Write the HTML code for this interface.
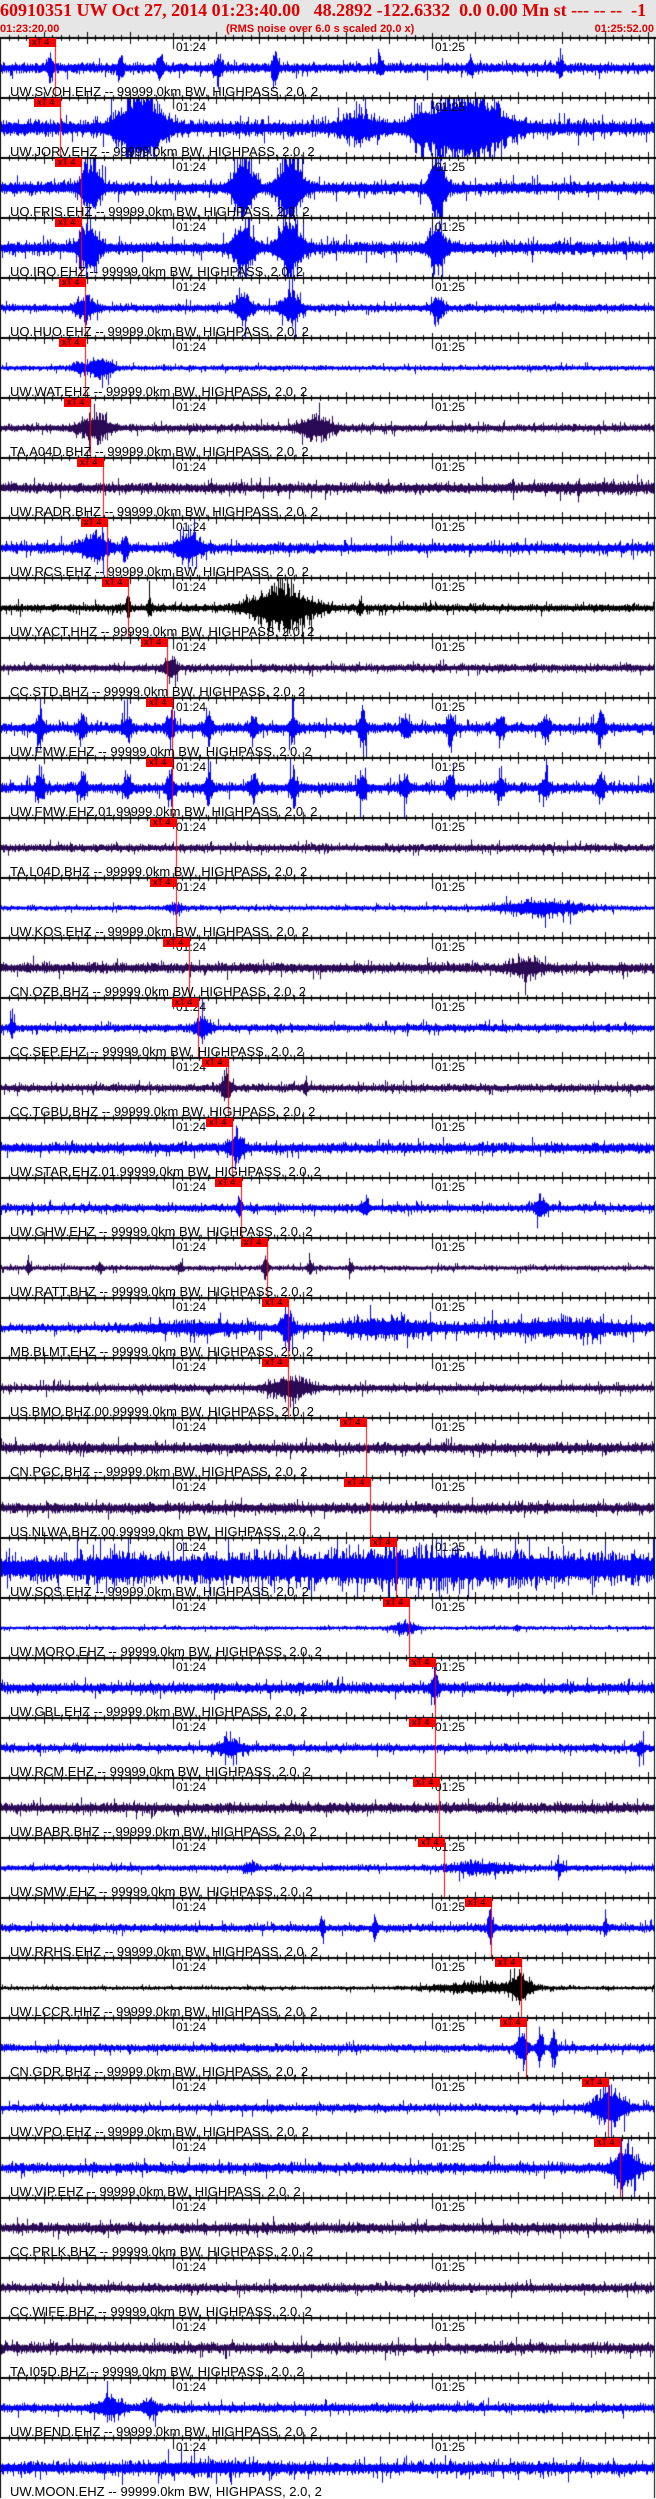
<!DOCTYPE html>
<html><head><meta charset="utf-8">
<style>
html,body{margin:0;padding:0;background:#fff;}
body{width:656px;height:2498px;position:relative;overflow:hidden;font-family:"Liberation Sans",sans-serif;}
#hdr{position:absolute;left:0;top:0;width:656px;height:38px;background:#e6e6e6;}
.t1{position:absolute;left:0;top:0px;font-family:"Liberation Serif",serif;font-weight:bold;font-size:18px;color:#e00000;white-space:pre;line-height:20px;}
.t2{position:absolute;top:23px;font-weight:bold;font-size:11px;color:#e00000;white-space:pre;line-height:13px;}
canvas{position:absolute;left:0;top:0;}
.lab{position:absolute;left:10px;font-size:13px;color:#000;white-space:pre;line-height:13px;}
.tl{position:absolute;font-size:12px;color:#000;line-height:12px;}
.mk{position:absolute;height:9px;width:27px;background:#f00;font-size:9px;line-height:9px;color:#000;text-indent:3px;}
</style></head><body>
<div id="hdr">
<div class="t1">60910351 UW Oct 27, 2014 01:23:40.00   48.2892 -122.6332  0.0 0.00 Mn st --- -- --  -1</div>
<div class="t2" style="left:0">01:23:20.00</div>
<div class="t2" style="left:226px">(RMS noise over 6.0 s scaled 20.0 x)</div>
<div class="t2" style="right:2px">01:25:52.00</div>
</div>
<canvas id="c" width="656" height="2498"></canvas>
<div id="ov"></div>
<script>
(function(){
var B='#0000ff',P='#2a0a55',K='#000000';
var panels=[
["UW.SVOH.EHZ -- 99999.0km BW, HIGHPASS, 2.0, 2",B,4,56,[[50,3,16],[160,3,16],[218,3,16],[275,3,22],[120,3,10],[380,3,10],[470,3,10],[560,3,8]]],
["UW.JORV.EHZ -- 99999.0km BW, HIGHPASS, 2.0, 2",B,6,61,[[140,22,40],[360,20,12],[420,10,14],[465,38,40]]],
["UO.FRIS.EHZ -- 99999.0km BW, HIGHPASS, 2.0, 2",B,5,82,[[90,10,28],[243,10,40],[290,12,40],[437,8,40]]],
["UO.IRO.EHZ -- 99999.0km BW, HIGHPASS, 2.0, 2",B,5,82,[[88,10,26],[243,10,30],[290,12,30],[437,8,30]]],
["UO.HUO.EHZ -- 99999.0km BW, HIGHPASS, 2.0, 2",B,3,86,[[85,10,12],[243,8,18],[290,10,18],[437,6,14]]],
["UW.WAT.EHZ -- 99999.0km BW, HIGHPASS, 2.0, 2",B,2,86,[[80,8,6],[98,8,14],[110,6,6]]],
["TA.A04D.BHZ -- 99999.0km BW, HIGHPASS, 2.0, 2",P,3,91,[[95,14,14],[315,16,12]]],
["UW.RADR.BHZ -- 99999.0km BW, HIGHPASS, 2.0, 2",P,4,104,[[600,60,2]]],
["UW.RCS.EHZ -- 99999.0km BW, HIGHPASS, 2.0, 2",B,4,108,[[95,14,15],[125,3,14],[188,12,16]]],
["UW.YACT.HHZ -- 99999.0km BW, HIGHPASS, 2.0, 2",K,3,129,[[128,2,14],[149,2,10],[280,30,24],[360,2,10]]],
["CC.STD.BHZ -- 99999.0km BW, HIGHPASS, 2.0, 2",P,3,168,[[170,6,12]]],
["UW.FMW.EHZ -- 99999.0km BW, HIGHPASS, 2.0, 2",B,4,173,[[40,4,18],[82,4,14],[127,4,14],[170,4,16],[208,4,16],[253,4,14],[293,4,14],[362,4,20],[405,4,14],[450,4,14],[500,4,14],[545,4,14],[600,4,14]]],
["UW.FMW.EHZ.01.99999.0km BW, HIGHPASS, 2.0, 2",B,4,173,[[40,4,18],[82,4,14],[127,4,14],[170,4,16],[208,4,16],[253,4,14],[293,4,14],[362,4,20],[405,4,14],[450,4,14],[500,4,14],[545,4,14],[600,4,14]]],
["TA.L04D.BHZ -- 99999.0km BW, HIGHPASS, 2.0, 2",P,3,177,[]],
["UW.KOS.EHZ -- 99999.0km BW, HIGHPASS, 2.0, 2",B,2,177,[[175,8,4],[540,40,8]]],
["CN.OZB.BHZ -- 99999.0km BW, HIGHPASS, 2.0, 2",P,4,190,[[525,15,8]]],
["CC.SEP.EHZ -- 99999.0km BW, HIGHPASS, 2.0, 2",B,3,199,[[12,3,8],[202,8,12]]],
["CC.TGBU.BHZ -- 99999.0km BW, HIGHPASS, 2.0, 2",P,3,229,[[226,5,16],[305,2,10]]],
["UW.STAR.EHZ.01.99999.0km BW, HIGHPASS, 2.0, 2",B,4,233,[[236,8,14]]],
["UW.GHW.EHZ -- 99999.0km BW, HIGHPASS, 2.0, 2",B,3,242,[[239,2,16],[365,4,10],[540,6,12]]],
["UW.RATT.BHZ -- 99999.0km BW, HIGHPASS, 2.0, 2",P,2,268,[[28,2,10],[265,3,14],[310,3,8],[350,2,10],[100,3,5],[180,3,5]]],
["MB.BLMT.EHZ -- 99999.0km BW, HIGHPASS, 2.0, 2",B,3,289,[[200,60,5],[287,6,18],[380,50,9],[560,80,8]]],
["US.BMO.BHZ.00.99999.0km BW, HIGHPASS, 2.0, 2",P,3,289,[[290,20,11]]],
["CN.PGC.BHZ -- 99999.0km BW, HIGHPASS, 2.0, 2",P,4,367,[]],
["US.NLWA.BHZ.00.99999.0km BW, HIGHPASS, 2.0, 2",P,4,371,[]],
["UW.SQS.EHZ -- 99999.0km BW, HIGHPASS, 2.0, 2",B,10,397,[[120,30,6],[420,200,8]]],
["UW.MORO.EHZ -- 99999.0km BW, HIGHPASS, 2.0, 2",B,1.5,410,[[405,12,6],[517,2,4]]],
["UW.GBL.EHZ -- 99999.0km BW, HIGHPASS, 2.0, 2",B,4,436,[[434,4,16]]],
["UW.RCM.EHZ -- 99999.0km BW, HIGHPASS, 2.0, 2",B,3,436,[[230,12,9],[640,4,8]]],
["UW.BABR.BHZ -- 99999.0km BW, HIGHPASS, 2.0, 2",P,4,440,[]],
["UW.SMW.EHZ -- 99999.0km BW, HIGHPASS, 2.0, 2",B,2.5,445,[[250,6,5],[480,30,5],[560,5,6]]],
["UW.RRHS.EHZ -- 99999.0km BW, HIGHPASS, 2.0, 2",B,3,492,[[322,2,14],[375,2,14],[490,3,20],[605,2,8]]],
["UW.LCCR.HHZ -- 99999.0km BW, HIGHPASS, 2.0, 2",K,1.5,522,[[480,50,5],[520,10,14]]],
["CN.GDR.BHZ -- 99999.0km BW, HIGHPASS, 2.0, 2",B,3,527,[[522,6,18],[540,3,18],[553,3,18]]],
["UW.VPO.EHZ -- 99999.0km BW, HIGHPASS, 2.0, 2",B,3,609,[[610,15,22]]],
["UW.VIP.EHZ -- 99999.0km BW, HIGHPASS, 2.0, 2",B,4,621,[[625,12,22]]],
["CC.PRLK.BHZ -- 99999.0km BW, HIGHPASS, 2.0, 2",P,4,0,[]],
["CC.WIFE.BHZ -- 99999.0km BW, HIGHPASS, 2.0, 2",P,3.5,0,[]],
["TA.I05D.BHZ -- 99999.0km BW, HIGHPASS, 2.0, 2",P,4,0,[]],
["UW.BEND.EHZ -- 99999.0km BW, HIGHPASS, 2.0, 2",B,3.5,0,[[110,14,10],[150,6,10]]],
["UW.MOON.EHZ -- 99999.0km BW, HIGHPASS, 2.0, 2",B,5,0,[[200,60,3]]]
];
var s=12345;function rnd(){s|=0;s=s+0x6D2B79F5|0;var t=Math.imul(s^s>>>15,1|s);t=t+Math.imul(t^t>>>7,61|t)^t;return((t^t>>>14)>>>0)/4294967296;}
var c=document.getElementById('c').getContext('2d');
var ov='';
for(var i=0;i<panels.length;i++){
 var p=panels[i],ty=38+i*60,cy=ty+30;
 c.fillStyle=p[1];
 for(var x=1;x<654;x+=1){
  var env=p[2]*1.3;
  for(var j=0;j<p[4].length;j++){var b=p[4][j];var d=(x-b[0])/b[1];env+=b[2]*Math.exp(-d*d);}
  var a1=env*(0.45+0.8*rnd()*rnd()),a2=env*(0.45+0.8*rnd()*rnd());
  if(rnd()<0.08){a1*=2;} if(rnd()<0.08){a2*=2;}
  var y1=Math.max(ty+1,cy-a1),y2=Math.min(ty+59,cy+a2);
  c.fillRect(x,y1,1,Math.max(1,y2-y1));
 }
 c.fillStyle='#000';
 c.fillRect(0,ty-1,656,2);
 var step=259/30;
 for(var k=-20;k<60;k++){
  var tx=Math.round(173+k*step); if(tx<1||tx>654)continue;
  var big=(k%5==0);
  if(k==0||k==30){c.fillRect(tx,ty-5,1,16);}
  else if(big){c.fillRect(tx,ty-6,1,12);}
  else c.fillRect(tx,ty-3,1,6);
 }
 ov+='<div class="tl" style="left:176px;top:'+(ty+3)+'px">01:24</div>';
 ov+='<div class="tl" style="left:435px;top:'+(ty+3)+'px">01:25</div>';
 ov+='<div class="lab" style="top:'+(ty+47)+'px">'+p[0]+'</div>';
 if(p[3]){
  c.fillStyle='#ff0000';c.fillRect(p[3]-1,ty,1,60);
  ov+='<div class="mk" style="left:'+(p[3]-27)+'px;top:'+ty+'px">xT 4</div>';
 }
}
c.fillStyle='#000';c.fillRect(0,38,1,2460);c.fillRect(654,38,1,2460);
document.getElementById('ov').innerHTML=ov;
})();
</script>
</body></html>
